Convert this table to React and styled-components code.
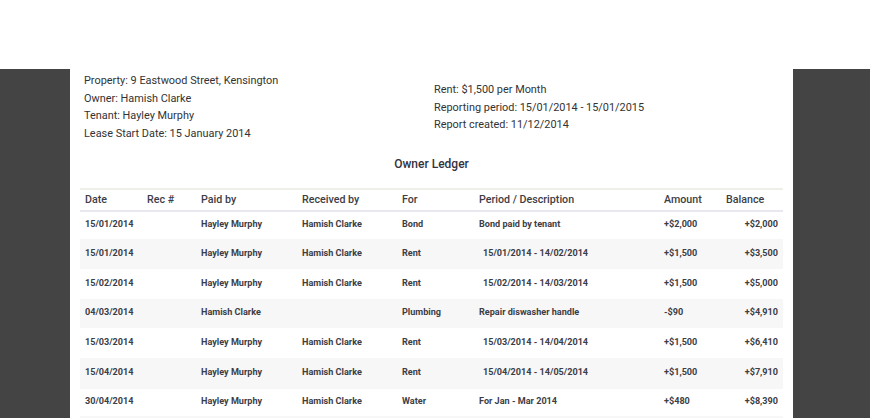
import styled, { createGlobalStyle } from "styled-components";

const GlobalStyle = createGlobalStyle`
  body {
    margin: 0;
    background: #ffffff;
    font-family: Roboto, "Liberation Sans", sans-serif;
  }
`;

const TopBand = styled.div`
  height: 69px;
  background: #ffffff;
`;

const Stage = styled.div`
  display: flex;
  background: #444444;
  height: 349px;
  overflow: hidden;
`;

const Side = styled.div`
  width: ${(p) => p.$w}px;
  flex-shrink: 0;
`;

const Sheet = styled.div`
  width: 723px;
  background: #ffffff;
  padding: 0 10px;
  box-sizing: border-box;
`;

const Info = styled.div`
  display: grid;
  grid-template-columns: 350px 1fr;
  padding-left: 4px;
  color: #333333;
  font-size: 10.9px;
  line-height: 17.7px;
`;

const InfoCol = styled.div`
  padding-top: ${(p) => p.$top || 3}px;
`;

const Title = styled.div`
  text-align: center;
  font-size: 12px;
  font-weight: 500;
  color: #333340;
  margin-top: 14px;
  height: 31px;
`;

const Table = styled.div`
  color: #3d3d45;
`;

const cols = "62px 54px 101px 100px 77px 185px 62px 1fr";

const HeadRow = styled.div`
  display: grid;
  grid-template-columns: ${cols};
  height: 20px;
  align-items: center;
  border-top: 2px solid #efeee9;
  border-bottom: 2px solid #e8e8f0;
  font-size: 10.7px;
  font-weight: 500;
`;

const Row = styled.div`
  display: grid;
  grid-template-columns: ${cols};
  height: ${(p) => p.$h}px;
  box-sizing: border-box;
  padding-bottom: 2px;
  align-items: center;
  background: ${(p) => (p.$alt ? "#f7f7f7" : "#ffffff")};
  font-size: 9.1px;
  font-weight: 700;
`;

const Cell = styled.div`
  padding: 0 5px;
  white-space: nowrap;
  text-align: ${(p) => (p.$right ? "right" : "left")};
  padding-left: ${(p) => (p.$indent ? 9 : 5)}px;
`;

const rows = [
  ["15/01/2014", "", "Hayley Murphy", "Hamish Clarke", "Bond", "Bond paid by tenant", false, "+$2,000", "+$2,000", 27],
  ["15/01/2014", "", "Hayley Murphy", "Hamish Clarke", "Rent", "15/01/2014 - 14/02/2014", true, "+$1,500", "+$3,500", 30],
  ["15/02/2014", "", "Hayley Murphy", "Hamish Clarke", "Rent", "15/02/2014 - 14/03/2014", true, "+$1,500", "+$5,000", 30],
  ["04/03/2014", "", "Hamish Clarke", "", "Plumbing", "Repair diswasher handle", false, "-$90", "+$4,910", 29],
  ["15/03/2014", "", "Hayley Murphy", "Hamish Clarke", "Rent", "15/03/2014 - 14/04/2014", true, "+$1,500", "+$6,410", 30],
  ["15/04/2014", "", "Hayley Murphy", "Hamish Clarke", "Rent", "15/04/2014 - 14/05/2014", true, "+$1,500", "+$7,910", 31],
  ["30/04/2014", "", "Hayley Murphy", "Hamish Clarke", "Water", "For Jan - Mar 2014", false, "+$480", "+$8,390", 27],
  ["", "", "", "", "", "", false, "", "", 30],
];

export default function App() {
  return (
    <>
      <GlobalStyle />
      <TopBand />
      <Stage>
        <Side $w={70} />
        <Sheet>
          <Info>
            <InfoCol>
              <div>Property: 9 Eastwood Street, Kensington</div>
              <div>Owner: Hamish Clarke</div>
              <div>Tenant: Hayley Murphy</div>
              <div>Lease Start Date: 15 January 2014</div>
            </InfoCol>
            <InfoCol $top={12}>
              <div>Rent: $1,500 per Month</div>
              <div>Reporting period: 15/01/2014 - 15/01/2015</div>
              <div>Report created: 11/12/2014</div>
            </InfoCol>
          </Info>
          <Title>Owner Ledger</Title>
          <Table>
            <HeadRow>
              <Cell>Date</Cell>
              <Cell>Rec #</Cell>
              <Cell>Paid by</Cell>
              <Cell>Received by</Cell>
              <Cell>For</Cell>
              <Cell>Period / Description</Cell>
              <Cell>Amount</Cell>
              <Cell>Balance</Cell>
            </HeadRow>
            {rows.map((r, i) => (
              <Row key={i} $alt={i % 2 === 1} $h={r[9]}>
                <Cell>{r[0]}</Cell>
                <Cell>{r[1]}</Cell>
                <Cell>{r[2]}</Cell>
                <Cell>{r[3]}</Cell>
                <Cell>{r[4]}</Cell>
                <Cell $indent={r[6]}>{r[5]}</Cell>
                <Cell>{r[7]}</Cell>
                <Cell $right>{r[8]}</Cell>
              </Row>
            ))}
          </Table>
        </Sheet>
        <Side $w={77} />
      </Stage>
    </>
  );
}
